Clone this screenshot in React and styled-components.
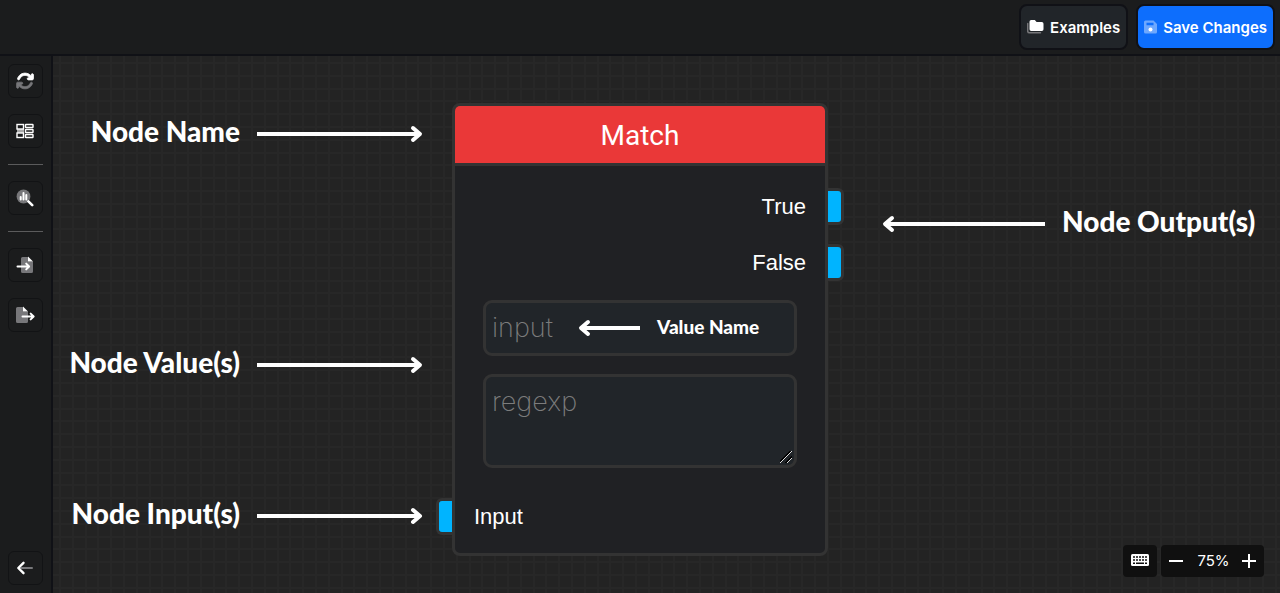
import React from "react";
import styled, { createGlobalStyle, css } from "styled-components";

const GlobalStyle = createGlobalStyle`
  *, *::before, *::after { box-sizing: border-box; }
  body {
    margin: 0;
    background: #232323;
    color: #fff;
    font-family: Inter, "Liberation Sans", sans-serif;
  }
  button, input, textarea { font: inherit; color: inherit; }
  svg { display: block; }
`;

const Page = styled.div`
  display: flex;
  flex-direction: column;
  min-height: 100vh;
`;

const TopBar = styled.header`
  display: flex;
  justify-content: flex-end;
  gap: 8px;
  padding: 4px 5px;
  background: #1b1c1d;
  border-bottom: 2px solid #101116;
`;

const BarButton = styled.button`
  display: flex;
  align-items: center;
  gap: 6px;
  height: 46px;
  padding: 0 6px;
  border: 2px solid #101116;
  border-radius: 8px;
  background: ${(p) => (p.$primary ? "#0d6efd" : "#212529")};
  font-size: 15px;
  font-weight: 600;
`;

const Workspace = styled.div`
  display: flex;
  flex: 1;
`;

const Sidebar = styled.nav`
  display: flex;
  flex-direction: column;
  gap: 16px;
  width: 53px;
  padding: 8px;
  background: #1b1c1d;
  border-right: 2px solid #101116;
`;

const ToolButton = styled.button`
  display: grid;
  place-items: center;
  width: 35px;
  height: 34px;
  padding: 0 1px 0 0;
  border: 1px solid #121315;
  border-radius: 6px;
  background: #1b1c1d;
  ${(p) => p.$last && css`margin-top: auto;`}
`;

const Divider = styled.hr`
  width: 35px;
  height: 1px;
  margin: 0;
  border: 0;
  background: #5b5b5c;
`;

const gridLines = (side) => `linear-gradient(to ${side},
  #272727 0 2px, transparent 2px 13px,
  #272727 13px 15px, transparent 15px 26px,
  #272727 26px 28px, transparent 28px 38px,
  #272727 38px 40px, transparent 40px 51px,
  #272727 51px 53px, transparent 53px)`;

const Canvas = styled.main`
  position: relative;
  flex: 1;
  min-height: 520px;
  overflow: hidden;
  background-color: #232323;
  background-image: ${gridLines("right")}, ${gridLines("bottom")};
  background-size: 64px 64px;
  background-position: 6px 6px;
`;

const NodeCard = styled.section`
  position: absolute;
  left: 399px;
  top: 47px;
  width: 376px;
  border: 3px solid #333;
  border-radius: 8px;
  background: #202124;
`;

const NodeTitle = styled.h2`
  margin: 0;
  padding-top: 2px;
  border-bottom: 3px solid #333;
  border-radius: 5px 5px 0 0;
  background: #ea3838;
  font: 400 28px/55px Roboto, sans-serif;
  text-align: center;
`;

const NodeBody = styled.div`
  padding: 12px 0 9px;
`;

const PortRow = styled.div`
  position: relative;
  display: flex;
  align-items: center;
  justify-content: ${(p) => (p.$side === "right" ? "flex-end" : "flex-start")};
  height: 56px;
  padding: 2px 19px 0;
  font: 22px "Liberation Sans", Arial, sans-serif;
`;

const Port = styled.button`
  position: absolute;
  top: 10px;
  width: 16px;
  height: 37px;
  padding: 0;
  border: 3px solid #333;
  background: #00b4ff;
  ${(p) =>
    p.$side === "right"
      ? css`left: 100%; margin-left: 3px; border-left: 0; border-radius: 0 6px 6px 0;`
      : css`right: 100%; margin-right: 3px; border-right: 0; border-radius: 6px 0 0 6px;`}
`;

const Fields = styled.div`
  display: flex;
  flex-direction: column;
  gap: 18px;
  padding: 10px 28px 20px;
`;

const fieldStyle = css`
  display: block;
  width: 100%;
  margin: 0;
  border: 3px solid #333;
  border-radius: 9px;
  background: #212529;
  font-family: Inter, "Liberation Sans", sans-serif;
  font-size: 27px;
  font-weight: 200;
  outline: none;
  &::placeholder { color: #7c7c7c; opacity: 1; }
`;

const TextField = styled.input`
  ${fieldStyle}
  height: 56px;
  padding: 0 6px 2px;
`;

const TextBlock = styled.textarea`
  ${fieldStyle}
  height: 94px;
  padding: 8px 6px;
  line-height: 33px;
  resize: vertical;
  &::-webkit-resizer {
    background: linear-gradient(135deg,
      transparent 0 7px, #000 7px 8px, #ddd 8px 9px, transparent 9px 12px,
      #000 12px 13px, #ddd 13px 14px, transparent 14px) 1px 1px / 12px 12px no-repeat;
  }
`;

const Note = styled.div`
  position: absolute;
  left: ${(p) => p.$x}px;
  top: ${(p) => p.$y}px;
  display: flex;
  align-items: center;
  justify-content: ${(p) => (p.$end ? "flex-end" : "flex-start")};
  gap: 17px;
  width: ${(p) => p.$width}px;
  pointer-events: none;
`;

const NoteText = styled.span`
  padding-bottom: ${(p) => (p.$small ? 2 : 6)}px;
  font: 900 ${(p) => (p.$small ? "19px/24px" : "28px/34px")} Lato, sans-serif;
  white-space: nowrap;
`;

const CanvasControls = styled.div`
  position: absolute;
  right: 16px;
  bottom: 16px;
  display: flex;
  gap: 4px;
`;

const ControlGroup = styled.div`
  display: flex;
  align-items: center;
  height: 32px;
  border-radius: 4px;
  background: #101010;
`;

const ControlButton = styled.button`
  display: grid;
  place-items: center;
  width: ${(p) => (p.$wide ? 34 : 30)}px;
  height: 32px;
  padding: 0;
  border: 0;
  background: none;
`;

const ZoomLevel = styled.output`
  width: 43px;
  padding: 0 0 2px 2px;
  font-size: 15px;
  text-align: center;
`;

const Icon = ({ w = 18, h = 18, children, ...rest }) => (
  <svg width={w} height={h} viewBox={`0 0 ${w} ${h}`} fill="none" aria-hidden="true" {...rest}>
    {children}
  </svg>
);

const RefreshIcon = () => (
  <Icon viewBox="0 0 512 512">
    <path fill="#77777a" stroke="#77777a" strokeWidth="20" d="M39 289.3c-5 1.5-9.8 4.2-13.7 8.2c-4 4-6.7 8.8-8.1 14c-.3 1.2-.6 2.5-.8 3.8c-.3 1.7-.4 3.4-.4 5.1V432c0 17.7 14.3 32 32 32s32-14.3 32-32V396.9l17.6 17.5c87.5 87.4 229.3 87.4 316.7 0c24.4-24.4 42.1-53.1 52.9-83.7c5.9-16.7-2.9-34.9-19.5-40.8s-34.9 2.9-40.8 19.5c-7.7 21.8-20.2 42.3-37.8 59.8c-62.5 62.5-163.8 62.5-226.3 0L125.6 352H160c17.7 0 32-14.3 32-32s-14.3-32-32-32H48.4c-1.6 0-3.2 .1-4.8 .3s-3.1 .5-4.6 1z" />
    <path fill="#fff" stroke="#fff" strokeWidth="24" d="M105.1 202.6c7.7-21.8 20.2-42.3 37.8-59.8c62.5-62.5 163.8-62.5 226.3 0L386.3 160H352c-17.7 0-32 14.3-32 32s14.3 32 32 32H463.9c17.7 0 32-14.3 32-32V80c0-17.7-14.3-32-32-32s-32 14.3-32 32v35.2L414.4 97.6c-87.5-87.5-229.3-87.5-316.8 0C73.2 122 55.6 150.7 44.8 181.4c-5.9 16.7 2.9 34.9 19.5 40.8s34.9-2.9 40.8-19.5z" />
  </Icon>
);

const LayoutIcon = () => (
  <Icon>
    <rect x="1" y="7" width="7" height="4" fill="#aaa" />
    <g stroke="#fff" strokeWidth="1.4">
      <rect x="1" y="2.5" width="6.5" height="4.5" />
      <rect x="1" y="11" width="6.5" height="4.5" />
      <rect x="9.500" y="2.5" width="7.500" height="3" rx=".5" />
      <rect x="9.500" y="7.5" width="7.500" height="3" rx=".5" />
      <rect x="9.500" y="12.5" width="7.500" height="3" rx=".5" />
    </g>
  </Icon>
);

const AnalyzeIcon = () => (
  <Icon>
    <circle cx="7.5" cy="7.5" r="6.9" fill="#77777a" />
    <path d="M4.7 8v2.5M7.5 4v6.5M10.3 6v4.5" stroke="#fff" strokeWidth="2" strokeLinecap="round" />
    <path d="M12.4 12.4l3.8 3.8" stroke="#fff" strokeWidth="2.6" strokeLinecap="round" />
  </Icon>
);

const ImportIcon = () => (
  <Icon>
    <path d="M6.5 1H12v4.5h5V15.5a1.500 1.500 0 0 1-1.500 1.500h-9A1.500 1.500 0 0 1 5 15.500v-13A1.500 1.500 0 0 1 6.500 1z" fill="#77777a" />
    <path d="M12 .500v5h5z" fill="#fff" />
    <path d="M1.500 10.500H13M10.200 7.600l2.900 2.900-2.900 2.900" stroke="#fff" strokeWidth="2" strokeLinecap="round" strokeLinejoin="round" />
  </Icon>
);

const ExportIcon = () => (
  <Icon w={20}>
    <path d="M2.500 1H8v4.500h5V15.500a1.500 1.500 0 0 1-1.500 1.500h-9A1.500 1.500 0 0 1 1 15.500v-13A1.500 1.500 0 0 1 2.500 1z" fill="#77777a" />
    <path d="M8 .500v5H13z" fill="#fff" />
    <path d="M7.500 10.500H18.500M15.700 7.600l2.900 2.900-2.900 2.900" stroke="#fff" strokeWidth="2" strokeLinecap="round" strokeLinejoin="round" />
  </Icon>
);

const BackIcon = () => (
  <Icon>
    <path d="M5 9h11" stroke="#77777a" strokeWidth="2" strokeLinecap="round" />
    <path d="M7.500 3.800L2.300 9l5.200 5.200" stroke="#fff" strokeWidth="2.400" strokeLinecap="round" strokeLinejoin="round" />
  </Icon>
);

const FoldersIcon = () => (
  <Icon w={17} h={14}>
    <path d="M.700 3.500v7.500a1.800 1.800 0 0 0 1.800 1.800h11" stroke="#77777a" strokeWidth="1.500" strokeLinecap="round" />
    <path d="M4.200 0h3.600l1.800 2h5.200A1.700 1.700 0 0 1 16.500 3.700v5.600A1.700 1.700 0 0 1 14.800 11H4.200a1.700 1.700 0 0 1-1.700-1.700V1.700A1.700 1.700 0 0 1 4.200 0z" fill="#fff" />
  </Icon>
);

const SaveIcon = () => (
  <Icon w={13} h={14}>
    <path fillRule="evenodd" d="M1.500 .500h8L13 4v8a1.500 1.500 0 0 1-1.500 1.500h-10A1.500 1.500 0 0 1 0 12V2A1.500 1.500 0 0 1 1.500 .500zM2.500 2.700v2.500h7v-2.500z" fill="#6ea8fe" />
    <circle cx="6.500" cy="9.500" r="2" fill="#fff" />
  </Icon>
);

const KeyboardIcon = () => (
  <Icon w={20} h={14}>
    <rect x="1" y="0" width="18" height="12" rx="1.500" fill="#fff" />
    <path d="M3 3h14M3 6h14" stroke="#101010" strokeWidth="1.500" strokeDasharray="2 1" />
    <path d="M3 9.300h2M6 9.300h8M15 9.300h2" stroke="#101010" strokeWidth="1.500" />
  </Icon>
);

const MinusIcon = () => (
  <Icon w={14} h={14}>
    <path d="M0 7h14" stroke="#fff" strokeWidth="2" />
  </Icon>
);

const PlusIcon = () => (
  <Icon w={14} h={14}>
    <path d="M0 7h14M7 0v14" stroke="#fff" strokeWidth="2" />
  </Icon>
);

const Arrow = ({ length, left }) => (
  <Icon w={length} h={18}>
    <path d={left ? `M${length} 9H4` : `M0 9H${length - 4}`} stroke="#fff" strokeWidth="4" />
    <path
      d={left ? "M10 3L3 9l7 6" : `M${length - 10} 3l7 6l-7 6`}
      stroke="#fff"
      strokeWidth="4"
      strokeLinecap="round"
      strokeLinejoin="round"
    />
  </Icon>
);

const notes = [
  { text: "Node Name", x: 0, y: 58 },
  { text: "Node Value(s)", x: 0, y: 289 },
  { text: "Node Input(s)", x: 0, y: 440 },
];

export default function App() {
  return (
    <Page>
      <GlobalStyle />
      <TopBar>
        <BarButton type="button"><FoldersIcon />Examples</BarButton>
        <BarButton type="button" $primary><SaveIcon />Save Changes</BarButton>
      </TopBar>
      <Workspace>
        <Sidebar aria-label="Tools">
          <ToolButton type="button" aria-label="Refresh"><RefreshIcon /></ToolButton>
          <ToolButton type="button" aria-label="Arrange"><LayoutIcon /></ToolButton>
          <Divider />
          <ToolButton type="button" aria-label="Analyze"><AnalyzeIcon /></ToolButton>
          <Divider />
          <ToolButton type="button" aria-label="Import"><ImportIcon /></ToolButton>
          <ToolButton type="button" aria-label="Export"><ExportIcon /></ToolButton>
          <ToolButton type="button" aria-label="Back" $last><BackIcon /></ToolButton>
        </Sidebar>
        <Canvas>
          <NodeCard>
            <NodeTitle>Match</NodeTitle>
            <NodeBody>
              <PortRow $side="right">True<Port type="button" aria-label="True output" $side="right" /></PortRow>
              <PortRow $side="right">False<Port type="button" aria-label="False output" $side="right" /></PortRow>
              <Fields>
                <TextField type="text" placeholder="input" aria-label="input" />
                <TextBlock placeholder="regexp" aria-label="regexp" />
              </Fields>
              <PortRow $side="left"><Port type="button" aria-label="Input" $side="left" />Input</PortRow>
            </NodeBody>
          </NodeCard>
          {notes.map((n) => (
            <Note key={n.text} $x={n.x} $y={n.y} $width={370} $end>
              <NoteText>{n.text}</NoteText>
              <Arrow length={166} />
            </Note>
          ))}
          <Note $x={829} $y={148} $width={380}>
            <Arrow length={163} left />
            <NoteText>Node Output(s)</NoteText>
          </Note>
          <Note $x={525} $y={259} $width={190}>
            <Arrow length={62} left />
            <NoteText $small>Value Name</NoteText>
          </Note>
          <CanvasControls>
            <ControlGroup>
              <ControlButton type="button" aria-label="Keyboard shortcuts" $wide><KeyboardIcon /></ControlButton>
            </ControlGroup>
            <ControlGroup>
              <ControlButton type="button" aria-label="Zoom out"><MinusIcon /></ControlButton>
              <ZoomLevel>75%</ZoomLevel>
              <ControlButton type="button" aria-label="Zoom in"><PlusIcon /></ControlButton>
            </ControlGroup>
          </CanvasControls>
        </Canvas>
      </Workspace>
    </Page>
  );
}
